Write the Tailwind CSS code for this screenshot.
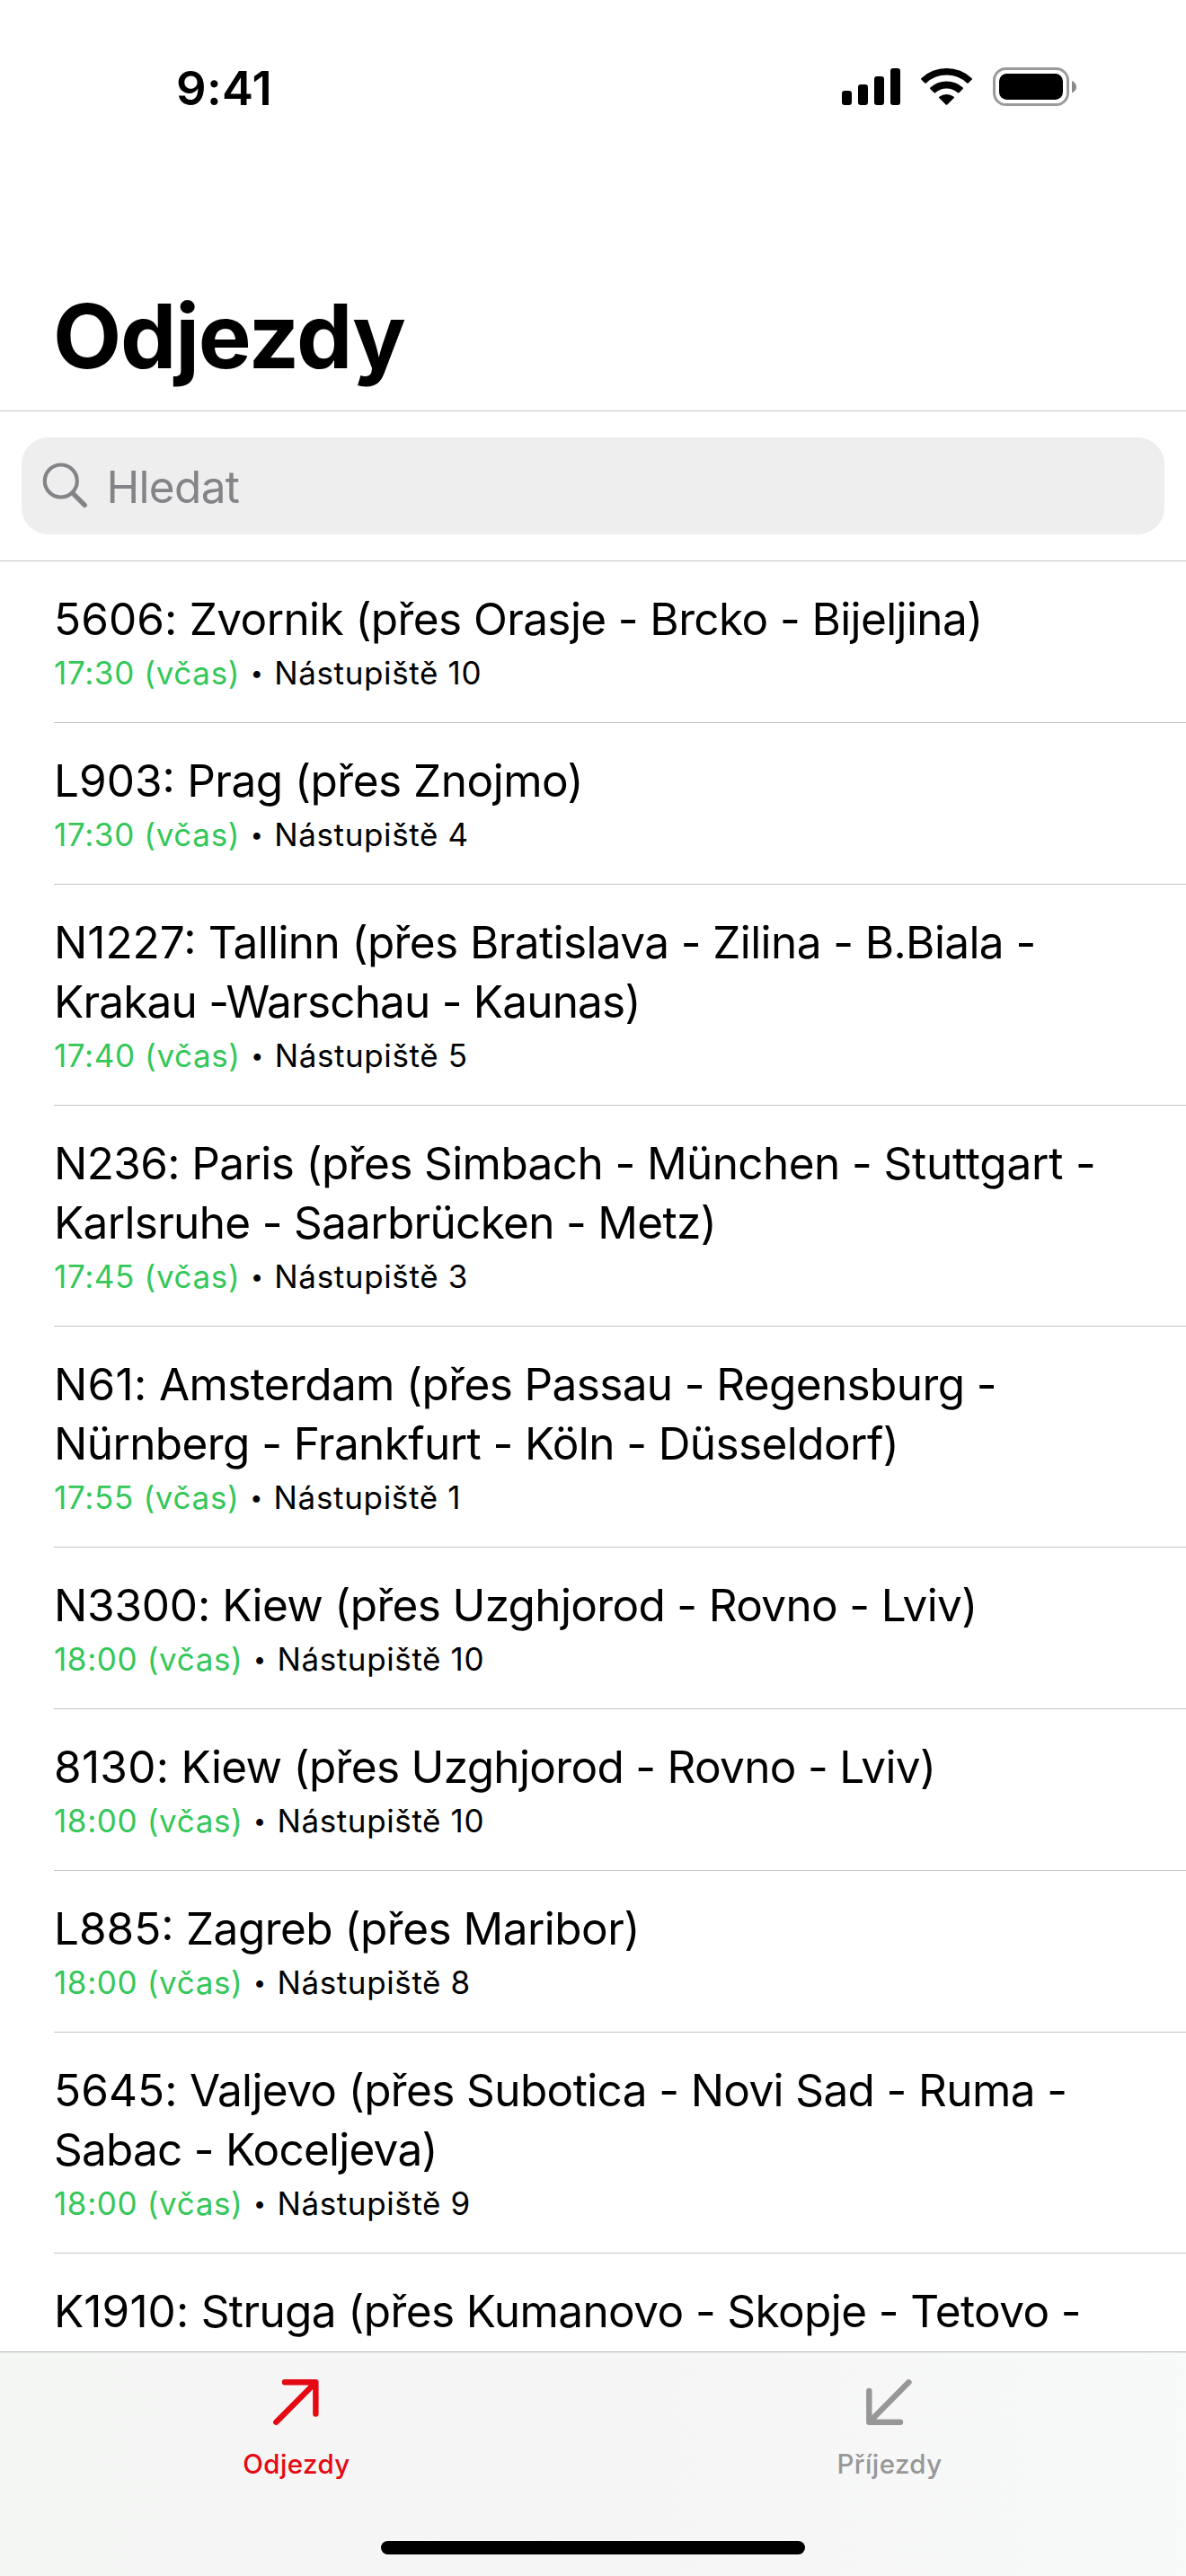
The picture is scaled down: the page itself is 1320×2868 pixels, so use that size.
<!DOCTYPE html>
<html lang="cs">
<head>
<meta charset="utf-8">
<title>Odjezdy</title>
<script src="https://cdn.jsdelivr.net/npm/@tailwindcss/browser@4"></script>
</head>
<body class="bg-white">
<div class="flex flex-col w-[1320px] h-[2868px] overflow-hidden bg-white text-black font-['Inter',sans-serif] whitespace-nowrap">

  <!-- Status bar -->
  <div class="flex shrink-0 justify-between h-[177px] pl-[196px] pr-[120px]">
    <span class="pt-[65px] text-[52.5px] leading-[66px] font-semibold tracking-[0.3px]">9:41</span>
    <svg class="mt-[70px] w-[264px] h-[52px]" viewBox="936 70 264 52">
      <rect x="937" y="101" width="11" height="16" rx="3.2"/>
      <rect x="955" y="94" width="11" height="23" rx="3.2"/>
      <rect x="973" y="85" width="11" height="32" rx="3.2"/>
      <rect x="991" y="76" width="11" height="41" rx="3.2"/>
      <path d="M1025.3 87.200a41 41 0 0 1 56.4 0q.6.7 0 1.4l-4 4q-.7.6-1.4 0a33 33 0 0 0-45.6 0q-.7.6-1.4 0l-4-4q-.6-.7 0-1.4z"/>
      <path d="M1035.3 97.600a27 27 0 0 1 36.400 0q.7.700 0 1.400l-4.300 4.200q-.7.600-1.400 0a19 19 0 0 0-25 0q-.7.600-1.400 0l-4.300-4.200q-.7-.700 0-1.400z"/>
      <path d="M1045.300 107.700a13.500 13.500 0 0 1 16.400 0q.8.700.1 1.400l-7.500 7.400q-.8.700-1.600 0l-7.500-7.400q-.7-.700.1-1.400z"/>
      <rect x="1106.500" y="76.500" width="82" height="40" rx="13" fill="none" stroke="#9a9a9a" stroke-width="3"/>
      <rect x="1112" y="82" width="71" height="29" rx="8.500"/>
      <path d="M1193 90c3 1.200 5 3.600 5 6.700s-2 5.500-5 6.700z" fill="#8a8a8a"/>
    </svg>
  </div>

  <!-- Large title -->
  <header class="flex shrink-0 items-end h-[281px] pl-[59px] pb-[23px] border-b border-[#c6c6c8]">
    <h1 class="text-[99px] leading-[120px] font-bold tracking-[-1.25px]">Odjezdy</h1>
  </header>

  <!-- Search -->
  <div class="shrink-0 h-[167px] px-6 pt-[29px] border-b border-[#c6c6c8]">
    <div class="flex items-center h-[108px] rounded-[30px] bg-[#eeeeee] pl-[22px] text-[#848488]">
      <svg class="w-[54px] h-[54px]" viewBox="0 0 54 54" fill="none" stroke="currentColor" stroke-linecap="round">
        <circle cx="21.800" cy="21.500" r="18" stroke-width="4.200"/>
        <path d="M35 35.200L48.200 48.400" stroke-width="5.400"/>
      </svg>
      <span class="pl-[18.500px] pt-px text-[49.5px] leading-[66px] tracking-[-0.7px]">Hledat</span>
    </div>
  </div>

  <!-- Departures -->
  <ul class="flex-1 min-h-0 overflow-hidden pl-[60px] text-[49.5px] leading-[66px]">
    <li class="h-[180px] pt-[31px] border-b border-[#c6c6c8]">
      <div class="tracking-[-0.6px]"><span class="tracking-[0.1px]">5606:</span> Zvornik (přes Orasje - Brcko - Bijeljina)</div>
      <div class="flex pt-[3px] text-[35px] leading-[48px] tracking-[0.64px]"><span class="text-[#34c759]">17:30 (včas)</span><span class="w-[38px] text-center text-[25px]">•</span><span>Nástupiště 10</span></div>
    </li>
    <li class="h-[180px] pt-[31px] border-b border-[#c6c6c8]">
      <div class="tracking-[-0.5px]"><span class="tracking-[0px]">L903:</span> Prag (přes Znojmo)</div>
      <div class="flex pt-[3px] text-[35px] leading-[48px] tracking-[0.64px]"><span class="text-[#34c759]">17:30 (včas)</span><span class="w-[38px] text-center text-[25px]">•</span><span>Nástupiště 4</span></div>
    </li>
    <li class="h-[246px] pt-[31px] border-b border-[#c6c6c8]">
      <div class="tracking-[-0.6px]"><span class="tracking-[0px]">N1227:</span> Tallinn (přes Bratislava - Zilina - B.Biala -</div>
      <div class="tracking-[-0.81px]">Krakau -Warschau - Kaunas)</div>
      <div class="flex pt-[3px] text-[35px] leading-[48px] tracking-[0.6px]"><span class="text-[#34c759]">17:40 (včas)</span><span class="w-[38px] text-center text-[25px]">•</span><span>Nástupiště 5</span></div>
    </li>
    <li class="h-[246px] pt-[31px] border-b border-[#c6c6c8]">
      <div class="tracking-[-0.6px]">N236: Paris (přes Simbach - München - <span class="tracking-[-0.2px]">Stuttgart -</span></div>
      <div class="tracking-[-0.69px]">Karlsruhe - Saarbrücken - Metz)</div>
      <div class="flex pt-[3px] text-[35px] leading-[48px] tracking-[0.64px]"><span class="text-[#34c759]">17:45 (včas)</span><span class="w-[38px] text-center text-[25px]">•</span><span>Nástupiště 3</span></div>
    </li>
    <li class="h-[246px] pt-[31px] border-b border-[#c6c6c8]">
      <div class="tracking-[-0.62px]"><span class="tracking-[0.3px]">N61:</span> Amsterdam (přes Passau - Regensburg -</div>
      <div class="tracking-[-0.59px]">Nürnberg - Frankfurt - Köln - Düsseldorf)</div>
      <div class="flex pt-[3px] text-[35px] leading-[48px] tracking-[0.68px]"><span class="text-[#34c759]">17:55 (včas)</span><span class="w-[38px] text-center text-[25px]">•</span><span>Nástupiště 1</span></div>
    </li>
    <li class="h-[180px] pt-[31px] border-b border-[#c6c6c8]">
      <div class="tracking-[-0.66px]"><span class="tracking-[-0.2px]">N3300:</span> Kiew (přes Uzghjorod - Rovno - Lviv)</div>
      <div class="flex pt-[3px] text-[35px] leading-[48px] tracking-[0.62px]"><span class="text-[#34c759]">18:00 (včas)</span><span class="w-[38px] text-center text-[25px]">•</span><span>Nástupiště 10</span></div>
    </li>
    <li class="h-[180px] pt-[31px] border-b border-[#c6c6c8]">
      <div class="tracking-[-0.68px]"><span class="tracking-[0.3px]">8130:</span> Kiew (přes Uzghjorod - Rovno - Lviv)</div>
      <div class="flex pt-[3px] text-[35px] leading-[48px] tracking-[0.62px]"><span class="text-[#34c759]">18:00 (včas)</span><span class="w-[38px] text-center text-[25px]">•</span><span>Nástupiště 10</span></div>
    </li>
    <li class="h-[180px] pt-[31px] border-b border-[#c6c6c8]">
      <div class="tracking-[-0.52px]"><span class="tracking-[0px]">L885:</span> Zagreb (přes Maribor)</div>
      <div class="flex pt-[3px] text-[35px] leading-[48px] tracking-[0.62px]"><span class="text-[#34c759]">18:00 (včas)</span><span class="w-[38px] text-center text-[25px]">•</span><span>Nástupiště 8</span></div>
    </li>
    <li class="h-[246px] pt-[31px] border-b border-[#c6c6c8]">
      <div class="tracking-[-0.62px]"><span class="tracking-[0.1px]">5645:</span> Valjevo (přes Subotica - Novi Sad - Ruma -</div>
      <div class="tracking-[-0.76px]">Sabac - Koceljeva)</div>
      <div class="flex pt-[3px] text-[35px] leading-[48px] tracking-[0.62px]"><span class="text-[#34c759]">18:00 (včas)</span><span class="w-[38px] text-center text-[25px]">•</span><span>Nástupiště 9</span></div>
    </li>
    <li class="pt-[31px]">
      <div class="tracking-[-0.6px]"><span class="tracking-[0.1px]">K1910:</span> Struga (přes Kumanovo - Skopje - Tetovo -</div>
    </li>
  </ul>

  <!-- Tab bar -->
  <nav class="flex flex-col shrink-0 h-[250px] border-t border-[#b2b2b2] bg-linear-to-r from-[#f4f6f4] via-[#f5f5f5] to-[#f8f9f9]">
    <div class="grid grid-cols-2 h-[210px] text-[29.5px] leading-[36px] font-medium tracking-[0.42px]">
      <div class="flex flex-col items-center pt-[26px] text-[#e50914]">
        <svg class="w-[60px] h-[60px]" viewBox="300 2645 60 60" fill="none" stroke="currentColor" stroke-width="6.400" stroke-linecap="round" stroke-linejoin="round">
          <path d="M317 2652.300H351.400V2687.500M350.500 2653.200L307.300 2696.800"/>
        </svg>
        <span class="pt-[20px]">Odjezdy</span>
      </div>
      <div class="flex flex-col items-center pt-[26px] text-[#979797]">
        <svg class="w-[60px] h-[60px]" viewBox="300 2645 60 60" fill="none" stroke="currentColor" stroke-width="6.400" stroke-linecap="round" stroke-linejoin="round">
          <path d="M342 2696.800H307.300V2662M308.200 2695.900L351.400 2652.300"/>
        </svg>
        <span class="pt-[20px]">Příjezdy</span>
      </div>
    </div>
    <div class="self-center w-[472px] h-[15px] rounded-full bg-black"></div>
  </nav>
</div>
</body>
</html>
